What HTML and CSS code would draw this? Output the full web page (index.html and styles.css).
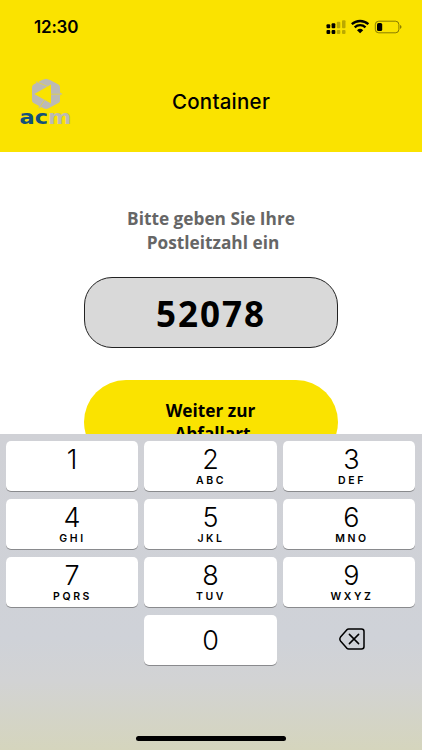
FILE: index.html
```html
<!DOCTYPE html>
<html lang="de">
<head>
    <meta charset="UTF-8">
    <meta name="viewport" content="width=device-width, initial-scale=1.0">
    <title>Container</title>
    <link rel="stylesheet" href="styles.css">
</head>
<body>
    <div class="screen">
        <header class="header">
            <div class="status-bar">
                <span class="time">12:30</span>
                <svg class="status-icons" width="78" height="18" viewBox="0 0 78 18">
                    <!-- dual sim signal -->
                    <rect x="2.5" y="6.3" width="3.7" height="4" rx="1"/>
                    <rect x="7.6" y="5.2" width="3.7" height="5.1" rx="1"/>
                    <rect x="2.5" y="12" width="3.7" height="3.9" rx="1"/>
                    <rect x="7.6" y="12" width="3.7" height="3.9" rx="1"/>
                    <g opacity="0.25">
                        <rect x="12.8" y="3.8" width="3.5" height="6.5" rx="1"/>
                        <rect x="18" y="2.2" width="3.5" height="8.1" rx="1"/>
                        <rect x="12.8" y="12" width="3.5" height="3.9" rx="1"/>
                        <rect x="18" y="12" width="3.5" height="3.9" rx="1"/>
                    </g>
                    <!-- wifi -->
                    <path d="M27.8 6.2a12.3 12.3 0 0 1 16.6 0M30.7 9.3a8 8 0 0 1 10.8 0" fill="none" stroke="#000" stroke-width="2.3"/>
                    <path d="M36.1 15.2l-3.1-3a4.7 4.7 0 0 1 6.2 0z"/>
                    <!-- battery -->
                    <rect x="51.3" y="3.2" width="23.6" height="11.6" rx="3.4" fill="none" stroke="#000" stroke-opacity="0.45"/>
                    <rect x="53" y="4.9" width="5.2" height="8.2" rx="1.6"/>
                    <path d="M76.1 7.1v3.8q1.4-.7 1.4-1.9t-1.4-1.9z" opacity="0.5"/>
                </svg>
            </div>
            <div class="title-bar">
                <svg class="logo" width="54" height="52" viewBox="0 0 54 52">
                    <path class="logo-gray" fill-rule="evenodd" d="M28 4.7L32 6L40.5 10.5Q42 11.5 42 13V26.5Q42 28 40.5 29L30 34.5Q28 35.3 26 34.5L15.5 29Q14 28 14 26.5V13Q14 11.5 15.5 10.5L24 6ZM16.3 20L33 29.6V10.4Z"/>
                    <path class="logo-gray" d="M17.5 7.2l5.5 1.5-3 2.3zM44.5 20l-4-2.5v5zM20.5 34.5l.8-5 3.5 3z"/>
                    <path class="logo-cut" d="M18 7.5L31 13M32.5 20.2H44M21 34L27 25.5"/>
                    <text x="1.5" y="49.5" class="logo-text" textLength="52" lengthAdjust="spacingAndGlyphs"><tspan class="logo-ac">ac</tspan><tspan class="logo-gray">m</tspan></text>
                </svg>
                <h1>Container</h1>
            </div>
        </header>
        <main class="content">
            <label class="prompt" for="plz">Bitte geben Sie Ihre <span class="line">Postleitzahl ein</span></label>
            <input class="plz" id="plz" type="text" inputmode="numeric" value="52078">
            <button class="next">Weiter zur <span class="line">Abfallart</span></button>
        </main>
        <div class="keyboard">
            <div class="keys">
                <div class="key">1</div>
                <div class="key">2<span>ABC</span></div>
                <div class="key">3<span>DEF</span></div>
                <div class="key">4<span>GHI</span></div>
                <div class="key">5<span>JKL</span></div>
                <div class="key">6<span>MNO</span></div>
                <div class="key">7<span>PQRS</span></div>
                <div class="key">8<span>TUV</span></div>
                <div class="key">9<span>WXYZ</span></div>
                <div></div>
                <div class="key zero">0</div>
                <div class="delete">
                    <svg width="26" height="22" viewBox="0 0 26 22">
                        <path d="M9.7 1H22.5Q25 1 25 3.5V18.5Q25 21 22.5 21H9.7Q8.6 21 7.7 20.1L1.5 12.9Q.2 11 1.5 9.1L7.7 1.9Q8.6 1 9.7 1ZM10.4 6.4l9.2 9.2M19.6 6.4l-9.2 9.2"/>
                    </svg>
                </div>
            </div>
            <div class="home-indicator"></div>
        </div>
    </div>
</body>
</html>
```
FILE: styles.css
```css
body {
    margin: 0;
    font-family: Inter, "Liberation Sans", sans-serif;
    color: #000;
    background-color: #fff;
}
.screen {
    width: 422px;
    height: 750px;
    display: flex;
    flex-direction: column;
    overflow: hidden;
}
.header {
    height: 151.5px;
    flex: none;
    background-color: #fae300;
}
.status-bar {
    display: flex;
    justify-content: space-between;
    align-items: center;
    height: 18px;
    padding: 18px 20px 0 34px;
}
.time {
    font-size: 17px;
    font-weight: 600;
    letter-spacing: -0.2px;
}
.title-bar {
    display: grid;
    grid-template-columns: 54px 1fr 54px;
    align-items: start;
    padding: 39px 18px 0;
}
h1 {
    margin: 13px 0 0;
    padding-left: 20px;
    font-size: 20.5px;
    line-height: 28px;
    font-weight: 500;
    letter-spacing: 0.25px;
    text-align: center;
}
.logo {
    margin-top: -1px;
}
.logo-text {
    font-family: "DejaVu Sans", sans-serif;
    font-size: 19px;
    font-weight: bold;
}
.logo-gray {
    fill: #bcbab5;
}
.logo-ac {
    fill: #13507a;
}
.logo-cut {
    fill: none;
    stroke: #e5d43b;
    stroke-width: 0.8;
}
.content {
    flex: 1;
    min-height: 0;
    overflow: hidden;
    display: flex;
    flex-direction: column;
    align-items: center;
    font-family: "Open Sans", sans-serif;
}
.prompt {
    width: 190px;
    margin-top: 55.5px;
    font-size: 17.25px;
    line-height: 23.5px;
    font-weight: 700;
    text-align: center;
    color: #666;
}
.line {
    display: block;
    padding-left: 4px;
}
.plz {
    box-sizing: border-box;
    flex: none;
    width: 254px;
    height: 71px;
    margin: 23px 1px 0 0;
    padding: 1px 0 0 1px;
    border: 1px solid #222;
    border-radius: 28px;
    background-color: #d9d9d9;
    font-family: inherit;
    font-size: 35px;
    font-weight: 700;
    letter-spacing: 2px;
    text-align: center;
    color: #000;
}
.next {
    flex: none;
    width: 254px;
    height: 84px;
    margin: 32px 1px 0 0;
    padding: 0 70px;
    border: none;
    border-radius: 42px;
    background-color: #fae300;
    font-family: inherit;
    font-size: 17.25px;
    line-height: 23.5px;
    font-weight: 700;
    color: #000;
}
.keyboard {
    flex: none;
    box-sizing: border-box;
    height: 316px;
    padding: 7px 7px 9px 6px;
    display: flex;
    flex-direction: column;
    justify-content: space-between;
    align-items: center;
    background: linear-gradient(#d0d1d6 0%, #cfd2d8 65%, #d2d3d4 78%, #d5d5bd 100%);
}
.keys {
    width: 100%;
    display: grid;
    grid-template-columns: repeat(3, 1fr);
    grid-auto-rows: 50px;
    gap: 8.1px 6.4px;
}
.key {
    display: flex;
    flex-direction: column;
    align-items: center;
    padding-top: 2.5px;
    box-sizing: border-box;
    border-radius: 5px;
    background-color: #fff;
    box-shadow: 0 1px 0 #898a8d;
    font-size: 27px;
    line-height: 31px;
    font-weight: 350;
}
.key:nth-child(3n) {
    padding-left: 5px;
}
.key span {
    font-size: 10.5px;
    line-height: 12px;
    font-weight: 600;
    letter-spacing: 2.6px;
    margin-right: -1px;
}
.zero {
    justify-content: center;
    padding-top: 0;
}
.delete {
    display: flex;
    justify-content: center;
    align-items: center;
    padding: 0 0 2px 6px;
}
.delete svg {
    fill: none;
    stroke: #000;
    stroke-width: 1.5;
    stroke-linecap: round;
    stroke-linejoin: round;
}
.home-indicator {
    width: 150px;
    height: 5px;
    border-radius: 3px;
    background-color: #000;
}
```
